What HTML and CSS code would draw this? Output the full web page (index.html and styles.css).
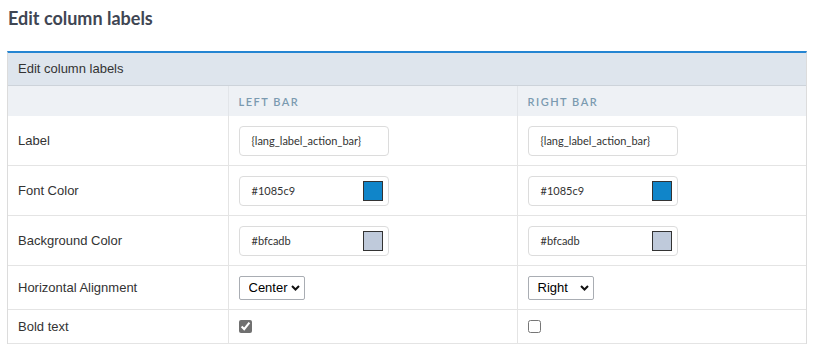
FILE: index.html
```html
<!DOCTYPE html>
<html lang="en">
<head>
    <meta charset="UTF-8">
    <title>Edit column labels</title>
    <link rel="stylesheet" href="styles.css">
</head>
<body>
    <h1 class="page-title">Edit column labels</h1>

    <div class="panel">
        <div class="panel-heading">Edit column labels</div>
        <table class="labels-table">
            <colgroup>
                <col class="col-name">
                <col class="col-bar">
                <col class="col-bar">
            </colgroup>
            <thead>
                <tr>
                    <th></th>
                    <th>Left Bar</th>
                    <th>Right Bar</th>
                </tr>
            </thead>
            <tbody>
                <tr class="row-input">
                    <td>Label</td>
                    <td><div class="field">{lang_label_action_bar}</div></td>
                    <td><div class="field">{lang_label_action_bar}</div></td>
                </tr>
                <tr class="row-input">
                    <td>Font Color</td>
                    <td><div class="field color-field">#1085c9 <span class="swatch blue"></span></div></td>
                    <td><div class="field color-field">#1085c9 <span class="swatch blue"></span></div></td>
                </tr>
                <tr class="row-input">
                    <td>Background Color</td>
                    <td><div class="field color-field">#bfcadb <span class="swatch grey"></span></div></td>
                    <td><div class="field color-field">#bfcadb <span class="swatch grey"></span></div></td>
                </tr>
                <tr class="row-select">
                    <td>Horizontal Alignment</td>
                    <td>
                        <span class="select-wrap">
                            <select class="align-select">
                                <option>Left</option>
                                <option selected>Center</option>
                                <option>Right</option>
                            </select>
                            <svg class="chevron" width="9" height="6" viewBox="0 0 9 6"><path d="M1 1 L4.5 4.5 L8 1" fill="none" stroke="#111" stroke-width="2"/></svg>
                        </span>
                    </td>
                    <td>
                        <span class="select-wrap">
                            <select class="align-select">
                                <option>Left</option>
                                <option>Center</option>
                                <option selected>Right</option>
                            </select>
                            <svg class="chevron" width="9" height="6" viewBox="0 0 9 6"><path d="M1 1 L4.5 4.5 L8 1" fill="none" stroke="#111" stroke-width="2"/></svg>
                        </span>
                    </td>
                </tr>
                <tr class="row-check">
                    <td>Bold text</td>
                    <td><input type="checkbox" class="check" checked></td>
                    <td><input type="checkbox" class="check"></td>
                </tr>
            </tbody>
        </table>
    </div>
</body>
</html>
```

FILE: styles.css
```css
body {
    margin: 0;
    padding: 0 9px 0 7px;
    font-family: 'Liberation Sans', Arial, sans-serif;
    font-size: 13px;
    color: #333;
    background: #fff;
}

.page-title {
    font-family: Lato, 'Liberation Sans', sans-serif;
    font-size: 18px;
    font-weight: 700;
    color: #3f4653;
    margin: 0;
    padding: 7px 0 0 1px;
    height: 51px;
    box-sizing: border-box;
}

.panel {
    border: 1px solid #dcdcdc;
    border-top: 2px solid #2585d2;
    border-bottom: none;
}

.panel-heading {
    background: #dee5ed;
    height: 32px;
    line-height: 32px;
    padding-left: 10px;
    border-bottom: 1px solid #cdd3da;
}

.labels-table {
    width: 100%;
    border-collapse: collapse;
    table-layout: fixed;
}

.col-name {
    width: 220px;
}

.labels-table th {
    background: #eef1f5;
    height: 30px;
    padding: 0 10px;
    text-align: left;
    font-family: Lato, 'Liberation Sans', sans-serif;
    font-size: 11px;
    font-weight: 600;
    letter-spacing: 1.5px;
    text-transform: uppercase;
    color: #7b9ab0;
    border-left: 1px solid #e2e5e9;
}

.labels-table th:first-child {
    border-left: none;
}

.labels-table td {
    padding: 0 10px;
    border-bottom: 1px solid #e4e4e4;
    border-left: 1px solid #e4e4e4;
    vertical-align: middle;
}

.labels-table td:first-child {
    border-left: none;
}

.row-input td {
    height: 49px;
}

.row-select td {
    height: 43px;
}

.row-check td {
    height: 33px;
}

.field {
    width: 150px;
    height: 30px;
    box-sizing: border-box;
    border: 1px solid #dcdcdc;
    border-radius: 4px;
    padding: 0 5px 0 12px;
    display: flex;
    align-items: center;
    justify-content: space-between;
    font-family: Lato, 'Liberation Sans', sans-serif;
    font-size: 11px;
    color: #333;
}

.swatch {
    width: 20px;
    height: 20px;
    box-sizing: border-box;
    border: 1px solid #333;
}

.swatch.blue {
    background: #1085c9;
}

.swatch.grey {
    background: #bfcadb;
}

.select-wrap {
    position: relative;
    display: inline-block;
    vertical-align: middle;
}

.align-select {
    appearance: none;
    -webkit-appearance: none;
    display: block;
    width: 66px;
    height: 24px;
    font-family: 'Liberation Sans', Arial, sans-serif;
    font-size: 13px;
    color: #000;
    border: 1px solid #a9adb3;
    border-radius: 2px;
    background: #fff;
    padding: 0 0 0 9px;
    margin: 0;
}

.chevron {
    position: absolute;
    right: 5px;
    top: 9px;
    pointer-events: none;
}

.check {
    margin: 3px 0 0 0;
    width: 13px;
    height: 13px;
    accent-color: #707070;
}
```
